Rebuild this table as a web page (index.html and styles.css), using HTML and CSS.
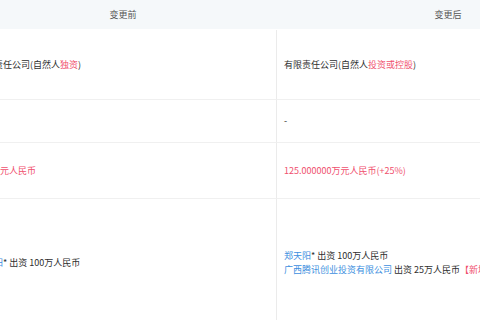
FILE: index.html
```html
<!DOCTYPE html>
<html lang="zh-CN">
<head>
<meta charset="utf-8">
<link rel="stylesheet" href="styles.css">
</head>
<body>
<div class="viewport">
  <div class="grid">
    <div class="th">变更前</div>
    <div class="th">变更后</div>

    <div class="td left r1">有限责任公司(自然人<span class="red">独资</span>)</div>
    <div class="td r1">有限责任公司(自然人<span class="red">投资或控股</span>)</div>

    <div class="td left r2">-</div>
    <div class="td r2">-</div>

    <div class="td left r3"><span class="red">100万元人民币</span></div>
    <div class="td r3"><span class="red">125.000000万元人民币(+25%)</span></div>

    <div class="td left r4">
      <div class="lines">
        <div><span class="blue">郑天阳</span>* 出资 100万人民币</div>
      </div>
    </div>
    <div class="td r4">
      <div class="lines">
        <div><span class="blue">郑天阳</span>* 出资 100万人民币</div>
        <div><span class="blue">广西腾讯创业投资有限公司</span> 出资 25万人民币<span class="red">【新增】</span></div>
      </div>
    </div>
  </div>
</div>
</body>
</html>
```

FILE: styles.css
```css
html, body {
  margin: 0;
  padding: 0;
  background: #ffffff;
}

.viewport {
  width: 480px;
  height: 320px;
  overflow: hidden;
}

.grid {
  display: grid;
  grid-template-columns: 308px 342px;
  grid-template-rows: 30px 70px 43px 56px 128px;
  margin-left: -31px;
  width: 650px;
  font-family: "Noto Sans CJK SC", "Microsoft YaHei", sans-serif;
  font-size: 9px;
  line-height: 14px;
  color: #2e2e2e;
}

.th {
  background: #f5f8fa;
  color: #555555;
  display: flex;
  align-items: center;
  justify-content: center;
  border-bottom: 1px solid #ffffff;
}

.td {
  display: flex;
  align-items: center;
  padding: 0 7px;
  border-bottom: 1px solid #f0f0f0;
  white-space: nowrap;
  overflow: hidden;
}

.td.left {
  border-right: 1px solid #ebebeb;
}

.red {
  color: #f0506e;
}

.blue {
  color: #3d8fe0;
}

.lines {
  display: flex;
  flex-direction: column;
}
```
